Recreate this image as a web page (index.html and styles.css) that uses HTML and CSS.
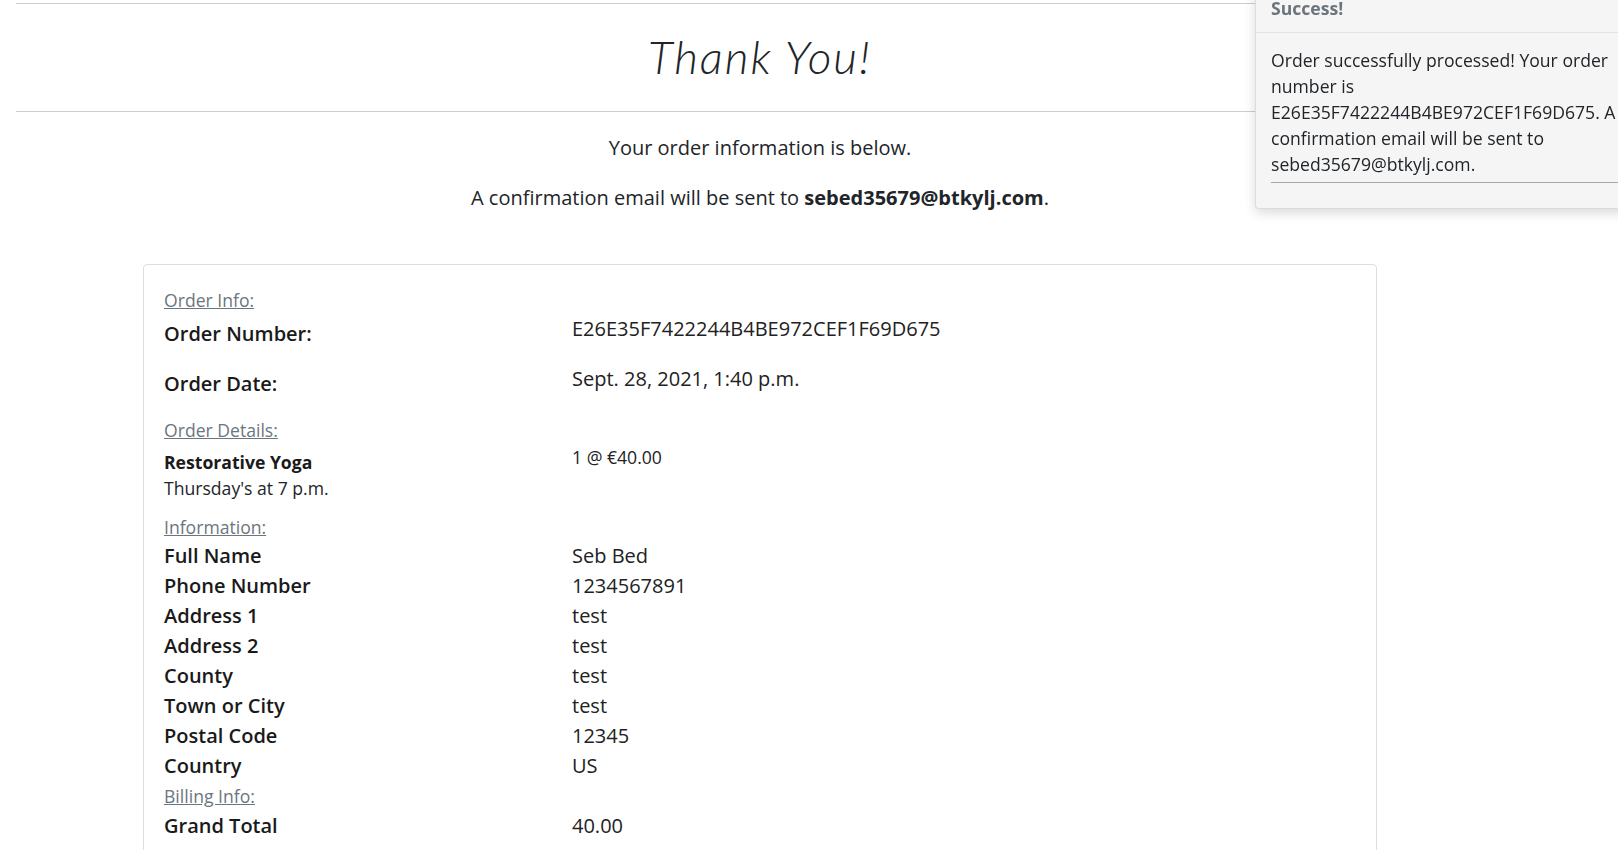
FILE: index.html
```html
<!DOCTYPE html>
<html lang="en">
<head>
<meta charset="utf-8">
<title>Thank You!</title>
<link rel="stylesheet" href="styles.css">
</head>
<body>
<div class="toast">
  <div class="toast-header"><strong>Success!</strong></div>
  <div class="toast-body">
    <p>Order successfully processed! Your order number is E26E35F7422244B4BE972CEF1F69D675. A confirmation email will be sent to sebed35679@btkylj.com.</p>
    <hr class="toast-rule">
  </div>
</div>

<main class="page">
  <hr class="rule">
  <h1 class="title">Thank You!</h1>
  <hr class="rule">
  <p class="lead lead-first">Your order information is below.</p>
  <p class="lead">A confirmation email will be sent to <strong>sebed35679@btkylj.com</strong>.</p>

  <section class="card">
    <div class="card-body">
      <a class="section-label" href="#">Order Info:</a>
      <div class="row row-main">
        <h5 class="key-main">Order Number:</h5>
        <p class="val-main">E26E35F7422244B4BE972CEF1F69D675</p>
      </div>
      <div class="row row-main">
        <h5 class="key-main">Order Date:</h5>
        <p class="val-main">Sept. 28, 2021, 1:40 p.m.</p>
      </div>

      <a class="section-label section-details" href="#">Order Details:</a>
      <div class="row row-item">
        <div class="item">
          <p class="item-name">Restorative Yoga</p>
          <p class="item-meta">Thursday's at 7 p.m.</p>
        </div>
        <p class="item-price">1 @ €40.00</p>
      </div>

      <a class="section-label section-info" href="#">Information:</a>
      <div class="row row-info"><p class="key">Full Name</p><p class="val">Seb Bed</p></div>
      <div class="row row-info"><p class="key">Phone Number</p><p class="val">1234567891</p></div>
      <div class="row row-info"><p class="key">Address 1</p><p class="val">test</p></div>
      <div class="row row-info"><p class="key">Address 2</p><p class="val">test</p></div>
      <div class="row row-info"><p class="key">County</p><p class="val">test</p></div>
      <div class="row row-info"><p class="key">Town or City</p><p class="val">test</p></div>
      <div class="row row-info"><p class="key">Postal Code</p><p class="val">12345</p></div>
      <div class="row row-info"><p class="key">Country</p><p class="val">US</p></div>

      <a class="section-label section-billing" href="#">Billing Info:</a>
      <div class="row row-info"><p class="key">Grand Total</p><p class="val">40.00</p></div>
    </div>
  </section>
</main>
</body>
</html>
```

FILE: styles.css
```css
html, body {
  margin: 0;
  padding: 0;
  overflow: hidden;
  background: #fff;
}

body {
  font-family: "Open Sans", "Liberation Sans", sans-serif;
  font-size: 17.6px;
  line-height: 26.4px;
  color: #212529;
}

p, h1, h5 {
  margin: 0;
}

/* ---------- page ---------- */
.page {
  width: 1520px;
  padding: 3px 16px 0;
  box-sizing: border-box;
  display: flex;
  flex-direction: column;
}

.rule {
  height: 0;
  margin: 0;
  border: 0;
  border-top: 1px solid #cdcdcd;
}

.title {
  margin: 25px 0 27px;
  font-family: Lato, "Open Sans", sans-serif;
  font-style: italic;
  font-weight: 300;
  font-size: 46px;
  line-height: 55.2px;
  letter-spacing: 2px;
  text-align: center;
  color: #212529;
}

.lead {
  font-size: 20px;
  line-height: 30px;
  text-align: center;
  margin-bottom: 20px;
}

.lead-first {
  margin-top: 21px;
}

.lead strong {
  font-weight: 700;
}

/* ---------- card ---------- */
.card {
  width: 1234px;
  margin: 30.5px auto 0;
  border: 1px solid #dedede;
  border-radius: 4px;
  box-sizing: border-box;
  height: 700px;
}

.card-body {
  padding: 22.5px 20px 20px;
  display: flex;
  flex-direction: column;
  align-items: stretch;
}

.section-label {
  align-self: flex-start;
  color: #6c757d;
  text-decoration: underline;
  text-decoration-color: #6c757d;
}

.section-details { margin-top: 3.5px; }
.section-info { margin-top: 12px; margin-bottom: 1.2px; }
.section-billing { margin-top: 1.3px; margin-bottom: 2px; }

.row {
  display: grid;
  grid-template-columns: 408px 1fr;
}

.key-main {
  padding-top: 5px;
  font-size: 20px;
  line-height: 30px;
  font-weight: 600;
  color: #1a1a1a;
}

.val-main {
  font-size: 20px;
  line-height: 30px;
  margin-bottom: 20px;
  color: #222;
}

.item {
  padding-top: 5.5px;
}

.item-name {
  font-weight: 700;
  color: #1a1a1a;
}

.item-price {
  color: #222;
}

.row-info .key {
  font-size: 20px;
  line-height: 30px;
  font-weight: 600;
  color: #1a1a1a;
}

.row-info .val {
  font-size: 20px;
  line-height: 30px;
  color: #222;
}

/* ---------- toast ---------- */
.toast {
  position: fixed;
  top: -11px;
  left: 1255px;
  width: 380px;
  background: #f5f5f5;
  border: 1px solid rgba(0, 0, 0, 0.1);
  border-radius: 4px;
  box-shadow: 0 4px 12px rgba(0, 0, 0, 0.15);
  z-index: 10;
}

.toast-header {
  padding: 5px 15px 10.5px;
  border-bottom: 1px solid #e2e2e2;
  color: #6c757d;
}

.toast-header strong {
  font-weight: 700;
}

.toast-body {
  padding: 14.5px 15px 25px;
  line-height: 26px;
  color: #212529;
}

.toast-rule {
  height: 0;
  margin: 4.8px 0 0;
  border: 0;
  border-top: 1px solid #a8a8a8;
}
```
